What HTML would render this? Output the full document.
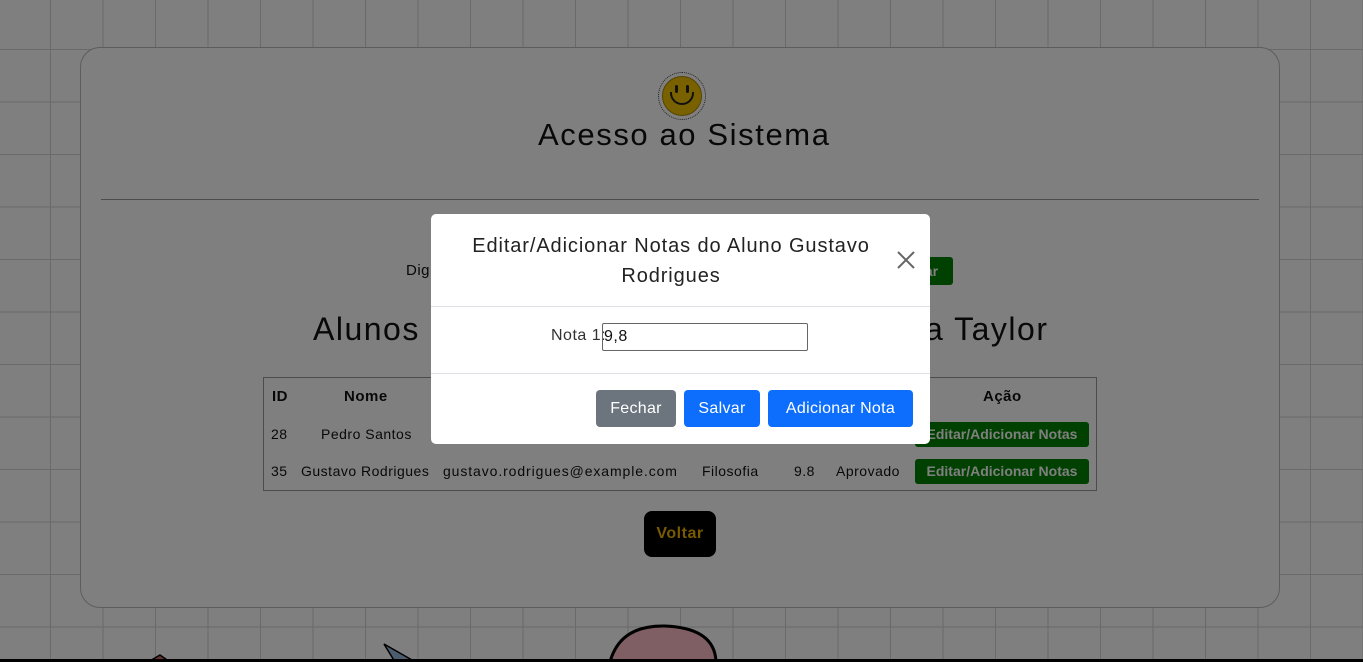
<!DOCTYPE html>
<html><head><meta charset="utf-8"><style>
*{box-sizing:border-box;margin:0;padding:0}
body{width:1363px;height:662px;overflow:hidden;position:relative;font-family:"Liberation Sans",sans-serif;background:#fff;letter-spacing:0.5px;
background-image:linear-gradient(#d4d4d4 1px,transparent 1px),linear-gradient(90deg,#d4d4d4 1px,transparent 1px);background-size:52.5px 52.5px;background-position:50px 49px}
.abs{position:absolute}
.card{left:80px;top:47px;width:1200px;height:561px;border:1px solid #bbb;border-radius:20px;background:#fff}
.t{color:#111;white-space:nowrap}
.overlay{left:0;top:0;width:1363px;height:662px;background:rgba(0,0,0,.5)}
.modal{left:431px;top:214px;width:499px;height:230px;background:#fff;border-radius:5px}
.btn{position:absolute;top:176px;height:37px;border-radius:4px;color:#fff;font-size:16px;line-height:37px;text-align:center;letter-spacing:0.3px}
.g{background:#008000;color:#fff;font-weight:bold;font-size:14px;border-radius:3px;text-align:center;letter-spacing:0}
</style></head><body>
<div class="abs card"></div>
<div class="abs" style="left:658px;top:72px;width:48px;height:48px;border-radius:50%;border:1px dotted #444"></div>
<div class="abs" style="left:662px;top:76px;width:40px;height:40px;border-radius:50%;background:#f2c200;border:1px solid #a80"></div>
<div class="abs" style="left:675px;top:85px;width:3px;height:8px;background:#222;border-radius:2px"></div>
<div class="abs" style="left:686px;top:85px;width:3px;height:8px;background:#222;border-radius:2px"></div>
<div class="abs" style="left:670px;top:92px;width:24px;height:13px;border:2px solid #222;border-top:none;border-radius:0 0 12px 12px"></div>
<div class="abs t" style="left:538px;top:117px;font-size:31px;letter-spacing:1.6px">Acesso ao Sistema</div>
<div class="abs" style="left:101px;top:199px;width:1158px;height:1px;background:#999"></div>
<div class="abs t" style="left:406px;top:262px;font-size:15px">Dig</div>
<div class="abs g" style="left:910px;top:257px;width:43px;height:28px;line-height:28px">ar</div>
<div class="abs t" style="left:313px;top:311px;font-size:32px;letter-spacing:1.5px">Alunos</div>
<div class="abs t" style="left:925px;top:311px;font-size:32px;letter-spacing:1.5px">a Taylor</div>
<div class="abs" style="left:263px;top:377px;width:834px;height:114px;border:1px solid #999"></div>
<div class="abs t" style="left:272px;top:388px;font-size:15px;font-weight:bold">ID</div>
<div class="abs t" style="left:344px;top:388px;font-size:15px;font-weight:bold">Nome</div>
<div class="abs t" style="left:983px;top:388px;font-size:15px;font-weight:bold">Ação</div>
<div class="abs t" style="left:271px;top:426px;font-size:14px">28</div>
<div class="abs t" style="left:321px;top:426px;font-size:14px">Pedro Santos</div>
<div class="abs g" style="left:915px;top:422px;width:174px;height:25px;line-height:25px">Editar/Adicionar Notas</div>
<div class="abs t" style="left:271px;top:463px;font-size:14px">35</div>
<div class="abs t" style="left:301px;top:463px;font-size:14px">Gustavo Rodrigues</div>
<div class="abs t" style="left:443px;top:463px;font-size:14px;letter-spacing:0.9px">gustavo.rodrigues@example.com</div>
<div class="abs t" style="left:702px;top:463px;font-size:14px">Filosofia</div>
<div class="abs t" style="left:794px;top:463px;font-size:14px">9.8</div>
<div class="abs t" style="left:836px;top:463px;font-size:14px">Aprovado</div>
<div class="abs g" style="left:915px;top:459px;width:174px;height:25px;line-height:25px">Editar/Adicionar Notas</div>
<div class="abs" style="left:644px;top:511px;width:72px;height:46px;background:#000;border-radius:8px;color:#f0b400;font-weight:bold;font-size:16px;line-height:46px;text-align:center">Voltar</div>
<svg class="abs" style="left:0;top:600px" width="1363" height="62">
<path d="M610 62 Q620 25 665 26 Q715 28 716 62 Z" fill="#ffbcc8" stroke="#000" stroke-width="3"/>
<path d="M384 44 L412 60 L395 62 Z" fill="#9bd" stroke="#000" stroke-width="1.5"/>
<path d="M148 62 L160 55 L170 62" fill="#c66" stroke="#000" stroke-width="1.5"/>
<rect x="0" y="59" width="1363" height="3" fill="#000"/>
</svg>
<div class="abs overlay"></div>
<div class="abs modal">
 <div class="abs t" style="left:20px;top:17px;width:440px;text-align:center;font-size:20px;line-height:30px;white-space:normal;color:#222;letter-spacing:0.9px">Editar/Adicionar Notas do Aluno Gustavo Rodrigues</div>
 <svg class="abs" style="left:466px;top:37px" width="18" height="18"><path d="M1 1L17 17M17 1L1 17" stroke="#666" stroke-width="2"/></svg>
 <div class="abs" style="left:0;top:92px;width:499px;height:1px;background:#dee2e6"></div>
 <div class="abs t" style="left:120px;top:113px;font-size:16px;color:#333">Nota 1:</div>
 <div class="abs" style="left:171px;top:109px;width:206px;height:28px;border:1px solid #666;border-radius:2px;font-size:16px;line-height:26px;padding-left:1px;color:#111">9,8</div>
 <div class="abs" style="left:0;top:159px;width:499px;height:1px;background:#dee2e6"></div>
 <div class="btn" style="left:165px;width:80px;background:#6c757d">Fechar</div>
 <div class="btn" style="left:253px;width:76px;background:#0d6efd">Salvar</div>
 <div class="btn" style="left:337px;width:145px;background:#0d6efd">Adicionar Nota</div>
</div>
</body></html>
